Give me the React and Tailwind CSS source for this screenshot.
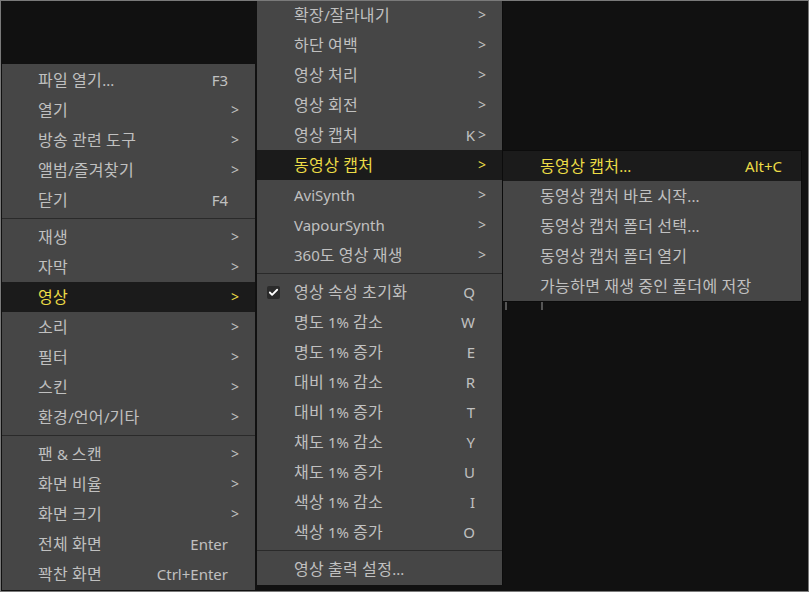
import { Check } from 'lucide-react'

const mainMenu = [
  { label: '파일 열기...', shortcut: 'F3' },
  { label: '열기', arrow: true },
  { label: '방송 관련 도구', arrow: true },
  { label: '앨범/즐겨찾기', arrow: true },
  { label: '닫기', shortcut: 'F4' },
  { sep: true },
  { label: '재생', arrow: true },
  { label: '자막', arrow: true },
  { label: '영상', arrow: true, active: true },
  { label: '소리', arrow: true },
  { label: '필터', arrow: true },
  { label: '스킨', arrow: true },
  { label: '환경/언어/기타', arrow: true },
  { sep: true },
  { label: '팬 & 스캔', arrow: true },
  { label: '화면 비율', arrow: true },
  { label: '화면 크기', arrow: true },
  { label: '전체 화면', shortcut: 'Enter' },
  { label: '꽉찬 화면', shortcut: 'Ctrl+Enter' },
]

const videoMenu = [
  { label: '확장/잘라내기', arrow: true },
  { label: '하단 여백', arrow: true },
  { label: '영상 처리', arrow: true },
  { label: '영상 회전', arrow: true },
  { label: '영상 캡처', shortcut: 'K', arrow: true },
  { label: '동영상 캡처', arrow: true, active: true },
  { label: 'AviSynth', arrow: true },
  { label: 'VapourSynth', arrow: true },
  { label: '360도 영상 재생', arrow: true },
  { sep: true },
  { label: '영상 속성 초기화', shortcut: 'Q', checked: true },
  { label: '명도 1% 감소', shortcut: 'W' },
  { label: '명도 1% 증가', shortcut: 'E' },
  { label: '대비 1% 감소', shortcut: 'R' },
  { label: '대비 1% 증가', shortcut: 'T' },
  { label: '채도 1% 감소', shortcut: 'Y' },
  { label: '채도 1% 증가', shortcut: 'U' },
  { label: '색상 1% 감소', shortcut: 'I' },
  { label: '색상 1% 증가', shortcut: 'O' },
  { sep: true },
  { label: '영상 출력 설정...' },
]

const captureMenu = [
  { label: '동영상 캡처...', shortcut: 'Alt+C', active: true },
  { label: '동영상 캡처 바로 시작...' },
  { label: '동영상 캡처 폴더 선택...' },
  { label: '동영상 캡처 폴더 열기' },
  { label: '가능하면 재생 중인 폴더에 저장' },
]

// 한글 부분만 조금 넓게 (원본 폰트의 글자 폭에 맞춤)
function Label({ text }) {
  return text.split(/([\uAC00-\uD7A3]+)/).map((part, i) =>
    /[\uAC00-\uD7A3]/.test(part) ? (
      <span key={i} className="text-[16px] tracking-[0.35px]">{part}</span>
    ) : (
      <span key={i}>{part}</span>
    )
  )
}

function MenuItem({ item, lead, pr, arrows }) {
  if (item.sep) {
    return (
      <div className="h-[7px] flex items-center">
        <div className="h-px w-full bg-[#2a2a2a]" />
      </div>
    )
  }
  return (
    <div
      className={`h-[30px] flex items-center ${pr} ${
        item.active ? 'bg-[#1b1b1b] text-[#ecdc46]' : 'text-[#c0c0c0]'
      }`}
    >
      <div className={`${lead} shrink-0 flex items-center pl-[10px]`}>
        {item.checked && (
          <span className="w-[13px] h-[13px] rounded-[2px] bg-[#2b2b2b] flex items-center justify-center">
            <Check className="w-[11px] h-[11px] text-white" strokeWidth={4} />
          </span>
        )}
      </div>
      <span className="flex-1 whitespace-nowrap">
        <Label text={item.label} />
      </span>
      {item.shortcut && <span className="whitespace-nowrap">{item.shortcut}</span>}
      {arrows && (
        <span className="w-[11px] text-right text-[14px]">{item.arrow ? '>' : ''}</span>
      )}
    </div>
  )
}

export default function App() {
  return (
    <div
      className="relative w-[809px] h-[592px] overflow-hidden bg-[#111111] border border-[#7a7a7a] text-[15px] leading-none"
      style={{ fontFamily: '"Noto Sans", "Noto Sans CJK KR", sans-serif' }}
    >
      {/* 메인 메뉴 */}
      <div className="absolute left-[1px] top-[63px] w-[253px] bg-[#464646] py-px">
        {mainMenu.map((it, i) => (
          <MenuItem key={i} item={it} lead="w-[36px]" pr="pr-[16px]" arrows />
        ))}
      </div>

      {/* 영상 하위 메뉴 */}
      <div className="absolute left-[256px] top-[-1px] w-[246px] bg-[#464646] border-r border-[#0c0c0c] pb-px">
        {videoMenu.map((it, i) => (
          <MenuItem key={i} item={it} lead="w-[37px]" pr="pr-[16px]" arrows />
        ))}
      </div>

      {/* 동영상 캡처 하위 메뉴 */}
      <div className="absolute left-[501px] top-[149px] w-[300px] bg-[#464646] border border-[#0c0c0c]">
        {captureMenu.map((it, i) => (
          <MenuItem key={i} item={it} lead="w-[37px]" pr="pr-[19px]" />
        ))}
      </div>

      {/* 뒤쪽 잔상 */}
      <div className="absolute left-[504px] top-[301px] w-[2px] h-[8px] bg-[#555555]" />
      <div className="absolute left-[540px] top-[301px] w-[2px] h-[8px] bg-[#555555]" />
    </div>
  )
}
